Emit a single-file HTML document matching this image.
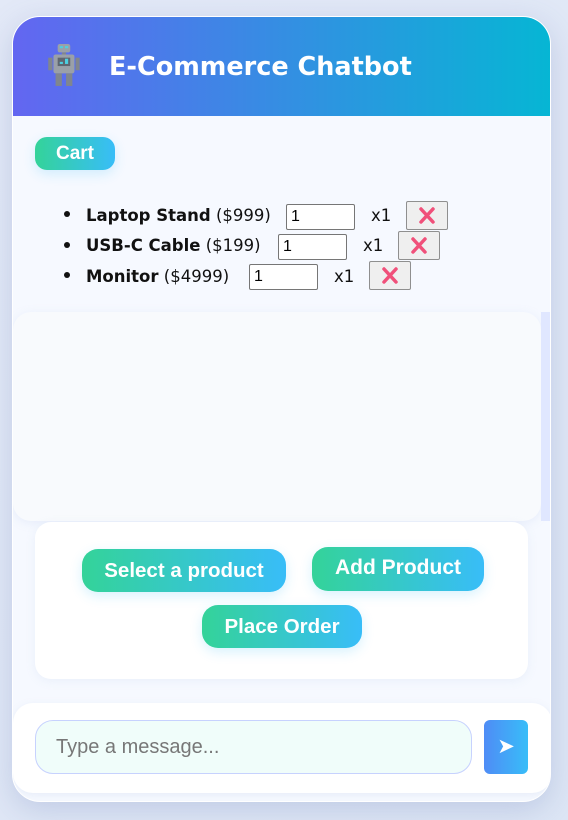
<!DOCTYPE html>
<html><head><style>
*{margin:0;padding:0;box-sizing:border-box}
body{width:568px;height:820px;background:linear-gradient(135deg,#e3e9f7,#dde6f5);font-family:"Liberation Sans",sans-serif;position:relative;overflow:hidden}
.abs{position:absolute}
.wrap{left:12px;top:16px;width:539px;height:786px;border-radius:28px;background:#f6f9ff;box-shadow:0 8px 30px rgba(100,120,180,.25);overflow:hidden;border:1px solid #fff}
.hdr{left:0;top:0;width:539px;height:99px;background:linear-gradient(90deg,#6366f1,#06b6d4)}
.title{left:96px;top:35px;color:#fff;font:bold 25.5px "DejaVu Sans","Liberation Sans",sans-serif}
.grad{background:linear-gradient(90deg,#34d399,#38bdf8);color:#fff;font-weight:bold;text-align:center;box-shadow:0 4px 12px rgba(56,189,248,.2)}
.row{color:#111;font-family:"DejaVu Sans","Liberation Sans",sans-serif;font-size:16.5px}
.inp{background:#fff;border:1px solid #767676;border-radius:2px;height:26px;width:69px;font-size:16px;padding:3px 4px;line-height:18px}
.xb{width:42px;height:29px;background:#efefef;border:1px solid #8f8f8f;border-radius:2px}
</style></head><body>
<div class="abs wrap">
 <div class="abs hdr"></div>
 <svg class="abs" style="left:32px;top:26px" width="40" height="44" viewBox="0 0 36 42">
  <rect x="11" y="1" width="12" height="8" rx="2" fill="#9aa0a8"/>
  <rect x="13" y="3" width="3" height="2" fill="#4dd0e1"/><rect x="18" y="3" width="3" height="2" fill="#4dd0e1"/>
  <rect x="15" y="9" width="4" height="2" fill="#80868e"/>
  <rect x="7" y="11" width="20" height="18" rx="2" fill="#9aa0a8"/>
  <rect x="11" y="14" width="12" height="8" fill="#5f6670"/>
  <rect x="13" y="18" width="3" height="2" fill="#4dd0e1"/><rect x="18" y="15" width="3" height="5" fill="#4dd0e1"/>
  <rect x="2" y="14" width="4" height="12" fill="#80868e"/><rect x="28" y="14" width="4" height="12" fill="#80868e"/>
  <rect x="9" y="29" width="6" height="12" fill="#80868e"/><rect x="19" y="29" width="6" height="12" fill="#80868e"/>
 </svg>
 <div class="abs title">E-Commerce Chatbot</div>
 <div class="abs grad" style="left:22px;top:120px;width:80px;height:33px;border-radius:12px;font-size:19px;line-height:33px">Cart</div>

 <div class="abs" style="left:51px;top:194px;width:6px;height:6px;border-radius:50%;background:#111"></div>
 <div class="abs row" style="left:73px;top:189px"><b>Laptop Stand</b> ($999)</div>
 <div class="abs inp" style="left:273px;top:187px">1</div>
 <div class="abs row" style="left:358px;top:189px">x1</div>
 <div class="abs xb" style="left:393px;top:184px"><svg width="40" height="27"><path d="M14 7 L26 20 M26 7 L14 20" stroke="#f0507a" stroke-width="3.5" stroke-linecap="round"/></svg></div>

 <div class="abs" style="left:51px;top:225px;width:6px;height:6px;border-radius:50%;background:#111"></div>
 <div class="abs row" style="left:73px;top:219px"><b>USB-C Cable</b> ($199)</div>
 <div class="abs inp" style="left:265px;top:217px">1</div>
 <div class="abs row" style="left:350px;top:219px">x1</div>
 <div class="abs xb" style="left:385px;top:214px"><svg width="40" height="27"><path d="M14 7 L26 20 M26 7 L14 20" stroke="#f0507a" stroke-width="3.5" stroke-linecap="round"/></svg></div>

 <div class="abs" style="left:51px;top:255px;width:6px;height:6px;border-radius:50%;background:#111"></div>
 <div class="abs row" style="left:73px;top:250px"><b>Monitor</b> ($4999)</div>
 <div class="abs inp" style="left:236px;top:247px">1</div>
 <div class="abs row" style="left:321px;top:250px">x1</div>
 <div class="abs xb" style="left:356px;top:244px"><svg width="40" height="27"><path d="M14 7 L26 20 M26 7 L14 20" stroke="#f0507a" stroke-width="3.5" stroke-linecap="round"/></svg></div>

 <div class="abs" style="left:0;top:295px;width:528px;height:209px;background:#f8fafd;border-radius:18px;box-shadow:0 2px 10px rgba(150,170,220,.15)"></div>
 <div class="abs" style="left:528px;top:295px;width:10px;height:209px;background:#e0e7ff"></div>

 <div class="abs" style="left:22px;top:505px;width:493px;height:157px;background:#fff;border-radius:16px;box-shadow:0 2px 10px rgba(150,170,210,.12)"></div>
 <div class="abs grad" style="left:69px;top:532px;width:204px;height:43px;border-radius:16px;font-size:20.5px;line-height:43px">Select a product</div>
 <div class="abs grad" style="left:299px;top:530px;width:172px;height:44px;border-radius:16px;font-size:21px;line-height:42px">Add Product</div>
 <div class="abs grad" style="left:189px;top:588px;width:160px;height:43px;border-radius:16px;font-size:20.5px;line-height:43px">Place Order</div>

 <div class="abs" style="left:0;top:686px;width:539px;height:90px;background:#fff;border-radius:20px;box-shadow:0 2px 8px rgba(150,170,210,.15)"></div>
 <div class="abs" style="left:22px;top:703px;width:437px;height:54px;background:#f0fdfa;border:1px solid #c7d2fe;border-radius:18px;color:#777;font-size:20px;line-height:52px;padding-left:20px">Type a message...</div>
 <div class="abs" style="left:471px;top:703px;width:44px;height:54px;border-radius:6px;background:linear-gradient(90deg,#4f8cf6,#38bdf8);color:#fff;font-size:21px;line-height:54px;text-align:center">➤</div>
</div>
</body></html>
